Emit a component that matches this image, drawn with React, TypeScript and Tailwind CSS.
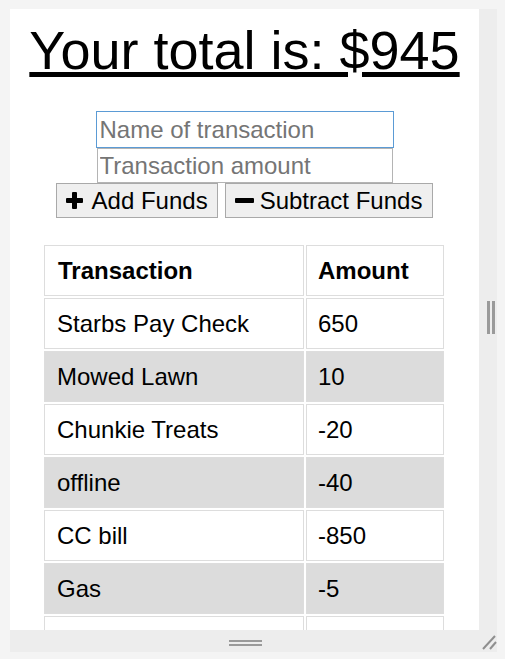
import React from 'react';

const rows: [string, string][] = [
  ['Starbs Pay Check', '650'],
  ['Mowed Lawn', '10'],
  ['Chunkie Treats', '-20'],
  ['offline', '-40'],
  ['CC bill', '-850'],
  ['Gas', '-5'],
  ['', ''],
];

const PlusIcon = () => (
  <svg width="17" height="17" viewBox="0 0 17 17" className="shrink-0">
    <rect x="6" y="0" width="5" height="17" rx="1" fill="#000" />
    <rect x="0" y="6" width="17" height="5" rx="1" fill="#000" />
  </svg>
);

const MinusIcon = () => (
  <svg width="19" height="5" viewBox="0 0 19 5" className="shrink-0">
    <rect x="0" y="0" width="19" height="5" rx="1" fill="#000" />
  </svg>
);

export default function App() {
  return (
    <div className="w-[505px] h-[659px] bg-[#f4f4f4] pt-[9px] pl-[10px] font-['Liberation_Sans',Arial,sans-serif] text-black overflow-hidden">
      <div className="grid grid-cols-[469px_18px] grid-rows-[621px_22px]">
        {/* page panel */}
        <div className="bg-white overflow-hidden flex flex-col items-center pt-[10px]">
          <h1 className="text-[54px] leading-[62px] underline whitespace-nowrap">Your total is: $945</h1>

          <div className="mt-[30px] flex flex-col items-center">
            <input
              className="w-[298px] h-[37px] border border-[#5b9bd5] px-[3px] text-[24px] placeholder:text-[#757575] outline-none"
              placeholder="Name of transaction"
            />
            <input
              className="w-[296px] h-[35px] border border-[#b4b4b4] px-[2px] text-[24px] placeholder:text-[#757575] outline-none"
              placeholder="Transaction amount"
            />
          </div>

          <div className="flex gap-[7px]">
            <button className="flex items-center gap-[9px] h-[35px] pl-[9px] pr-[9px] border border-[#a9a9a9] bg-[#efefef] text-[24px] leading-[27px]">
              <PlusIcon />
              <span>Add Funds</span>
            </button>
            <button className="flex items-center gap-[6px] h-[35px] pl-[9px] pr-[10px] border border-[#a9a9a9] bg-[#efefef] text-[24px] leading-[27px]">
              <MinusIcon />
              <span>Subtract Funds</span>
            </button>
          </div>

          <table className="mt-[25px] self-start ml-[32px] w-[404px] table-fixed border-separate border-spacing-[2px] text-[24px] leading-[27px] shrink-0">
            <colgroup>
              <col className="w-[260px]" />
              <col className="w-[138px]" />
            </colgroup>
            <thead>
              <tr>
                <th className="border border-[#dddddd] py-[11px] pl-[13px] text-left font-bold">Transaction</th>
                <th className="border border-[#dddddd] py-[11px] pl-[11px] text-left font-bold">Amount</th>
              </tr>
            </thead>
            <tbody>
              {rows.map(([name, amount], i) => (
                <tr key={i} className={i % 2 === 1 ? 'bg-[#dcdcdc]' : 'bg-white'}>
                  <td className="border border-[#dddddd] py-[11px] pl-[12px] h-[51px]">{name}</td>
                  <td className="border border-[#dddddd] py-[11px] pl-[11px] h-[51px]">{amount}</td>
                </tr>
              ))}
            </tbody>
          </table>
        </div>

        {/* right resize strip */}
        <div className="bg-[#ededed] flex items-center justify-start pl-[8px]">
          <div className="flex gap-[2px] -mt-[4px]">
            <div className="w-[3px] h-[33px] bg-[#9a9a9a]" />
            <div className="w-[3px] h-[33px] bg-[#9a9a9a]" />
          </div>
        </div>

        {/* bottom resize strip */}
        <div className="bg-[#ededed] flex flex-col items-center pt-[10px] gap-[2px]">
          <div className="w-[33px] h-[2px] bg-[#9a9a9a] ml-[1px]" />
          <div className="w-[33px] h-[2px] bg-[#9a9a9a] ml-[1px]" />
        </div>

        {/* corner */}
        <div className="bg-[#ededed] relative">
          <svg width="18" height="22" viewBox="0 0 18 22" className="absolute left-0 top-0">
            <line x1="4" y1="19" x2="16" y2="6" stroke="#8f8f8f" strokeWidth="2" />
            <line x1="11" y1="19" x2="17" y2="12" stroke="#8f8f8f" strokeWidth="2" />
          </svg>
        </div>
      </div>
    </div>
  );
}
